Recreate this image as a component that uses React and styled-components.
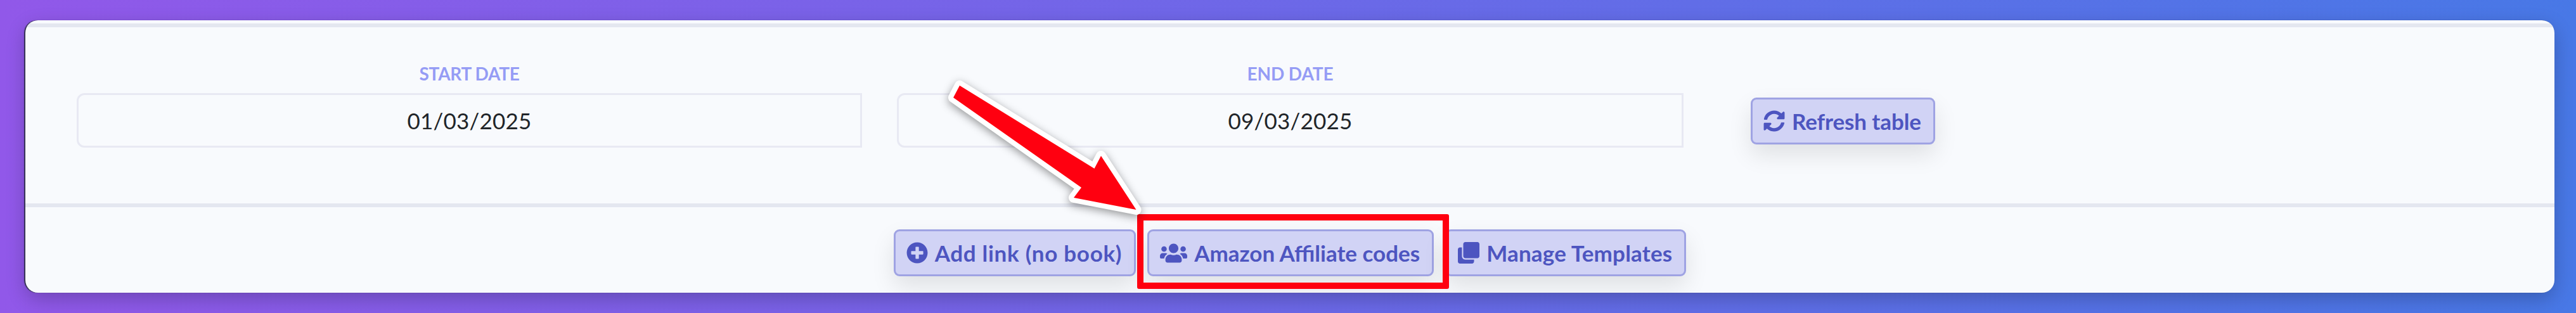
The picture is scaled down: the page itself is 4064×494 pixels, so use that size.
import styled, { createGlobalStyle } from "styled-components";
import { FaPlusCircle, FaUsers, FaClone, FaSyncAlt } from "react-icons/fa";

const GlobalStyle = createGlobalStyle`
	html, body {
		margin: 0;
		padding: 0;
		overflow: hidden;
	}
	body {
		font-family: "Lato", "Noto Sans", sans-serif;
	}
`;

export default function App() {
	return (
		<Page>
			<GlobalStyle />
			<Card>
				<Divider $top />
				<DateRow>
					<DateField $width={1239}>
						<DateLabel $spacing={-0.3}>START DATE</DateLabel>
						<DateInput>01/03/2025</DateInput>
					</DateField>
					<DateField $width={1241}>
						<DateLabel $spacing={-0.1}>END DATE</DateLabel>
						<DateInput>09/03/2025</DateInput>
					</DateField>
					<RefreshButton>
						<FaSyncAlt className="icon" />
						<ButtonText $spacing={-0.1}>Refresh table</ButtonText>
					</RefreshButton>
				</DateRow>
				<Divider />
				<Footer>
					<Button>
						<FaPlusCircle className="icon" />
						<ButtonText $spacing={0.7}>Add link (no book)</ButtonText>
					</Button>
					<Button>
						<FaUsers className="icon users" />
						<ButtonText $spacing={0}>Amazon Affiliate codes</ButtonText>
					</Button>
					<Button>
						<FaClone className="icon" />
						<ButtonText $spacing={0.2}>Manage Templates</ButtonText>
					</Button>
				</Footer>
			</Card>
			<HighlightBox />
			<ArrowMark viewBox="0 0 4064 494">
				<polygon points="1514,135 1726.5,266 1737,246 1792.5,331 1694,312 1706,296 1504,154" />
			</ArrowMark>
		</Page>
	);
}

const Page = styled.div`
	width: 4064px;
	height: 494px;
	padding: 32px 34px 32px 40px;
	box-sizing: border-box;
	position: relative;
	background: linear-gradient(90deg, #9158e9 0%, #4878e6 100%);
`;

const Card = styled.main`
	height: 430px;
	display: flex;
	flex-direction: column;
	background-color: #f8fafd;
	border-radius: 20px;
	overflow: hidden;
	box-shadow: -1.5px 0 1px rgba(40, 44, 60, 0.85), 0 10px 30px rgba(0, 0, 0, 0.22);
`;

const Divider = styled.div`
	height: 6px;
	flex-shrink: 0;
	margin-top: ${(props) => (props.$top ? "5px" : "0")};
	background-color: #e4e7f0;
`;

const DateRow = styled.section`
	height: 278px;
	box-sizing: border-box;
	padding: 0 0 88px 81px;
	display: flex;
	align-items: flex-end;
	gap: 55px;
`;

const DateField = styled.div`
	width: ${(props) => props.$width}px;
	display: flex;
	flex-direction: column;
	align-items: center;
	gap: 15px;
`;

const DateLabel = styled.label`
	font-size: 28px;
	line-height: 32px;
	font-weight: 700;
	color: #959cf5;
	letter-spacing: ${(props) => props.$spacing}px;
`;

const DateInput = styled.div`
	width: 100%;
	height: 86px;
	box-sizing: border-box;
	display: flex;
	align-items: center;
	justify-content: center;
	border: 3px solid #e8e9f3;
	border-radius: 12px 0 0 12px;
	font-size: 35px;
	letter-spacing: 0.2px;
	color: #212529;
`;

const Button = styled.button`
	height: 74px;
	box-sizing: border-box;
	padding: 0 19px 0 17px;
	display: flex;
	align-items: center;
	gap: 11px;
	background-color: #d1d3f5;
	border: 3px solid #9fa3e3;
	border-radius: 9px;
	color: #4d55c0;
	font-family: inherit;
	box-shadow: 0 16px 36px rgba(0, 0, 0, 0.1);

	.icon {
		font-size: 34px;
		flex-shrink: 0;
	}

	.users {
		font-size: 43px;
		width: 43px;
	}
`;

const RefreshButton = styled(Button)`
	margin-left: 51px;
	margin-bottom: 5px;
`;

const ButtonText = styled.span`
	font-size: 35px;
	line-height: 1;
	font-weight: 700;
	white-space: nowrap;
	letter-spacing: ${(props) => props.$spacing}px;
`;

const Footer = styled.footer`
	flex: 1;
	padding-top: 35px;
	display: flex;
	align-items: flex-start;
	justify-content: center;
	gap: 18px;
`;

const HighlightBox = styled.div`
	position: absolute;
	left: 1794px;
	top: 338px;
	width: 492px;
	height: 118px;
	box-sizing: border-box;
	border: 10px solid #ff0010;
	border-radius: 3px;
`;

const ArrowMark = styled.svg`
	position: absolute;
	left: 0;
	top: 0;
	width: 4064px;
	height: 494px;
	pointer-events: none;
	filter: drop-shadow(0 4px 7px rgba(0, 0, 0, 0.4));

	polygon {
		fill: #ff0010;
		stroke: #fff;
		stroke-width: 16px;
		stroke-linejoin: round;
		paint-order: stroke;
	}
`;
